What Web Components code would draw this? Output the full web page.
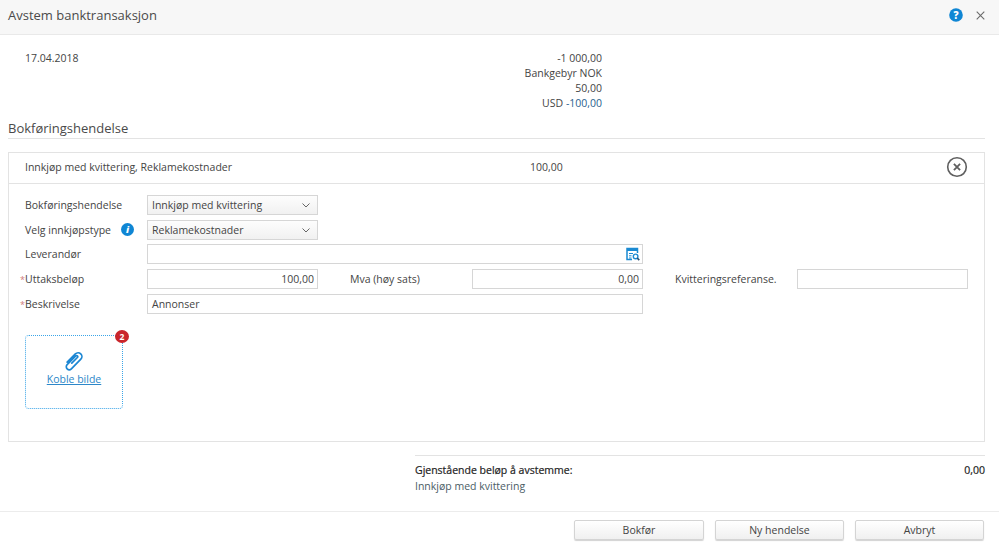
<!DOCTYPE html>
<html lang="nb">
<head>
<meta charset="utf-8">
<title>Avstem banktransaksjon</title>
<style>
  html, body { margin: 0; padding: 0; background: #fff; }
  body { font-family: "Open Sans", "Noto Sans", sans-serif; font-size: 10.5px; color: #444; width: 999px; height: 546px; overflow: hidden; }
</style>
</head>
<body>
<recon-dialog>
  <recon-header slot="header" title="Avstem banktransaksjon"></recon-header>
  <recon-transaction></recon-transaction>
  <h-section label="Bokføringshendelse"></h-section>
  <event-card></event-card>
  <recon-summary></recon-summary>
  <recon-footer slot="footer"></recon-footer>
</recon-dialog>

<script>
const define = (name, css, html, setup) => {
  customElements.define(name, class extends HTMLElement {
    constructor() {
      super();
      this.attachShadow({mode: 'open'});
      this.shadowRoot.innerHTML = `<style>${css}</style>${html}`;
      if (setup) setup(this);
    }
  });
};

define('recon-dialog', `
  :host { display: flex; flex-direction: column; height: 546px; }
`, `<slot name="header"></slot><slot></slot><slot name="footer"></slot>`);

define('recon-header', `
  :host { display: flex; align-items: center; height: 35px; box-sizing: border-box; padding: 0 14px 0 8px; background: #f7f7f7; border-bottom: 1px solid #e9e9e9; }
  .t { flex: 1; font-size: 13px; color: #4a4a4a; position: relative; top: -2px; }
  svg { display: block; position: relative; top: -2px; }
  .help { margin-right: 13px; }
`, `<div class="t">Avstem banktransaksjon</div>
  <svg class="help" width="14" height="14" viewBox="0 0 14 14"><circle cx="7" cy="7" r="6.8" fill="#0f86d4"/><text x="7" y="10.6" text-anchor="middle" font-family="Open Sans" font-weight="800" font-size="10" fill="#fff">?</text></svg>
  <svg width="9" height="9" viewBox="0 0 9 9"><path d="M.7.7l7.6 7.6M8.3.7L.7 8.3" stroke="#6b6b6b" stroke-width="1.1" fill="none"/></svg>`);

define('recon-transaction', `
  :host { display: grid; grid-template-columns: 576px 1fr; padding: 16px 0 0 25px; box-sizing: border-box; height: 81px; line-height: 15px; }
  .vals { text-align: right; display: flex; flex-direction: column; width: 1px; align-items: flex-end; white-space: nowrap; }
  .vals div { width: max-content; }
  .b { color: #2a5f8e; }
`, `<div class="date">17.04.2018</div>
  <div class="vals"><div>-1 000,00</div><div>Bankgebyr NOK</div><div>50,00</div><div>USD <span class="b">-100,00</span></div></div>`);

define('h-section', `
  :host { display: block; margin: 3px 14px 0 8px; height: 19px; border-bottom: 1px solid #e3e3e3; font-size: 13px; line-height: 19px; color: #4a4a4a; }
`, `<span></span>`, el => {
  el.shadowRoot.querySelector('span').textContent = el.getAttribute('label') || 'Bokføringshendelse';
});

define('form-field', `
  :host { display: block; box-sizing: border-box; height: 20px; border: 1px solid #d6d6d6; background: #fff; color: #444; line-height: 18px; padding: 0 3px 0 4px; position: relative; }
  :host([sel]) { background: linear-gradient(#fdfdfd, #f1f1f1); }
  :host([num]) { text-align: right; }
  svg { position: absolute; right: 7px; top: 7px; }
  .lookup { right: 2px; top: 2px; }
`, `<slot></slot><span id="i"></span>`, el => {
  const i = el.shadowRoot.getElementById('i');
  if (el.hasAttribute('sel')) i.innerHTML = `<svg width="8" height="5" viewBox="0 0 8 5"><path d="M.5.5L4 4 7.5.5" stroke="#666" fill="none"/></svg>`;
  if (el.hasAttribute('lookup')) i.innerHTML = `<svg class="lookup" width="14" height="14" viewBox="0 0 14 14"><path d="M11.5 6V1.5H1v11h5" fill="none" stroke="#1a8ad2" stroke-width="1.5"/><path d="M1 1h11v3H1z" fill="#1a8ad2"/><path d="M3 6.5h4M3 8.8h2.5M3 11h2.5" stroke="#1a8ad2"/><circle cx="9.6" cy="9.4" r="2.3" fill="none" stroke="#1a8ad2" stroke-width="1.4"/><path d="M11.3 11.1l2 2" stroke="#2b4f70" stroke-width="1.5"/></svg>`;
});

define('field-label', `
  :host { display: flex; align-items: center; height: 20px; position: relative; white-space: nowrap; }
  :host([req])::before { content: "*"; position: absolute; left: -5px; top: 4px; color: #d07a7a; font-size: 9px; }
  ::slotted(svg) { margin-left: 10px; }
`, `<slot></slot><slot name="icon"></slot>`);

define('attach-box', `
  :host { display: flex; flex-direction: column; align-items: center; box-sizing: border-box; position: relative; width: 98px; height: 74px; border: 1px dotted #3aa5e8; border-radius: 4px; padding-top: 14px; }
  a { color: #2d87c9; text-decoration: underline; margin-top: 0; line-height: 17px; }
  svg { margin-top: 1px; }
  .badge { position: absolute; top: -6px; right: -7px; width: 14px; height: 13px; border-radius: 50%; background: #c9252b; color: #fff; font-size: 8.5px; font-weight: 700; line-height: 13px; text-align: center; }
`, `<svg width="20" height="20" viewBox="0 0 19 19"><path d="M7.4 11.6l5.3-5.4a1 1 0 0 0-1.5-1.5L3 13a2.8 2.8 0 0 0 4 4l9-9.2a3.6 3.6 0 0 0-5.2-5L3 10.6" fill="none" stroke="#1b86d3" stroke-width="1.6" stroke-linecap="round"/></svg>
  <a>Koble bilde</a><span class="badge">2</span>`);

define('event-card', `
  :host { display: block; box-sizing: border-box; margin: 13px 14px 0 8px; height: 290px; border: 1px solid #e3e3e3; }
  .top { display: flex; align-items: center; height: 28px; padding: 0 0 2px 16px; border-bottom: 1px solid #e3e3e3; position: relative; }
  .top .name { width: 505px; }
  .top svg { position: absolute; right: 16px; top: 3px; }
  .form { display: grid; grid-template-columns: 122px 171px 32px 122px 171px 32px 122px 171px; grid-auto-rows: 20px; row-gap: 4.7px; padding: 11px 16px 0 16px; }
  .wide { grid-column: 2 / 6; }
  .s { grid-column: 2; }
  .attach { margin: 21px 0 0 16px; }
  .form field-label.m { grid-column: 4; }
  .form .g { grid-column: 5; }
`, `<div class="top"><span class="name">Innkjøp med kvittering, Reklamekostnader</span><span>100,00</span>
    <svg width="22" height="22" viewBox="0 0 22 22"><circle cx="11" cy="11" r="9.3" fill="none" stroke="#5f5f5f" stroke-width="1.6"/><path d="M7.9 7.9l6.2 6.2M14.1 7.9l-6.2 6.2" stroke="#5f5f5f" stroke-width="1.8" fill="none"/></svg></div>
  <div class="form">
    <field-label>Bokføringshendelse</field-label><form-field class="s" sel>Innkjøp med kvittering</form-field>
    <field-label style="grid-column:1">Velg innkjøpstype<svg slot="icon" width="13" height="13" viewBox="0 0 13 13"><circle cx="6.5" cy="6.5" r="6.5" fill="#0f86d4"/><text x="6.5" y="10.2" text-anchor="middle" font-family="Open Sans" font-style="italic" font-weight="800" font-size="9.5" fill="#fff">i</text></svg></field-label><form-field class="s" sel>Reklamekostnader</form-field>
    <field-label style="grid-column:1">Leverandør</field-label><form-field class="wide" lookup></form-field>
    <field-label style="grid-column:1" req>Uttaksbeløp</field-label><form-field num>100,00</form-field>
    <field-label class="m">Mva (høy sats)</field-label><form-field class="g" num>0,00</form-field>
    <span></span><field-label>Kvitteringsreferanse.</field-label><form-field></form-field>
    <field-label style="grid-column:1" req>Beskrivelse</field-label><form-field class="wide">Annonser</form-field>
  </div>
  <attach-box class="attach"></attach-box>`);

define('recon-summary', `
  :host { display: block; margin: 13px 14px 0 415px; border-top: 1px solid #e3e3e3; padding-top: 6px; line-height: 16px; }
  .r { display: flex; justify-content: space-between; color: #222; -webkit-text-stroke: .2px #222; }
  .n { color: #4b5d66; }
`, `<div class="r"><span>Gjenstående beløp å avstemme:</span><span>0,00</span></div><div class="n">Innkjøp med kvittering</div>`);

define('recon-button', `
  :host { display: flex; align-items: center; justify-content: center; box-sizing: border-box; width: 129px; height: 20px; border: 1px solid #d4d4d4; border-radius: 2px; background: linear-gradient(#fff, #f0f0f0); box-shadow: 0 1px 1px rgba(0,0,0,.18); color: #444; }
`, `<slot></slot>`);

define('recon-footer', `
  :host { display: flex; justify-content: flex-end; gap: 11px; margin-top: auto; height: 35px; box-sizing: border-box; padding: 8px 15px 0 0; border-top: 1px solid #ececec; }
`, `<recon-button style="width:130px">Bokfør</recon-button><recon-button>Ny hendelse</recon-button><recon-button>Avbryt</recon-button>`);
</script>
</body>
</html>
